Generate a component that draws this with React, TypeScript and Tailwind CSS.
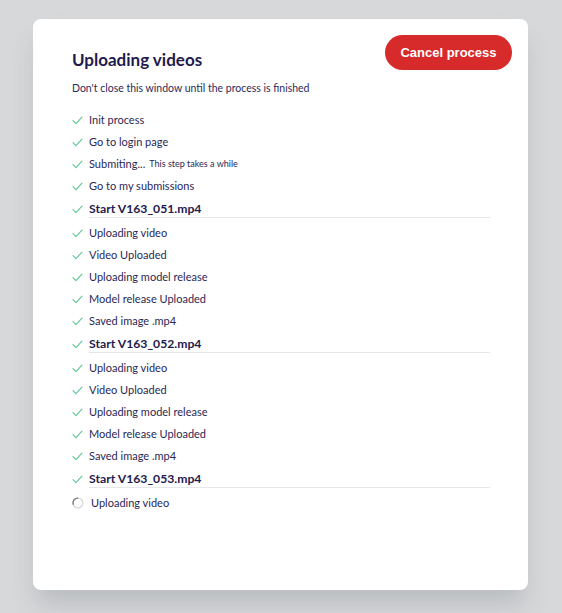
import React from "react";

type Step = { label: string; kind?: "header" | "pending"; note?: string };

const steps: Step[] = [
  { label: "Init process" },
  { label: "Go to login page" },
  { label: "Submiting...", note: "This step takes a while" },
  { label: "Go to my submissions" },
  { label: "Start V163_051.mp4", kind: "header" },
  { label: "Uploading video" },
  { label: "Video Uploaded" },
  { label: "Uploading model release" },
  { label: "Model release Uploaded" },
  { label: "Saved image .mp4" },
  { label: "Start V163_052.mp4", kind: "header" },
  { label: "Uploading video" },
  { label: "Video Uploaded" },
  { label: "Uploading model release" },
  { label: "Model release Uploaded" },
  { label: "Saved image .mp4" },
  { label: "Start V163_053.mp4", kind: "header" },
  { label: "Uploading video", kind: "pending" },
];

function Check() {
  return (
    <svg width="11" height="9" viewBox="0 0 11 9" fill="none" className="shrink-0">
      <path d="M1 4.6 L3.9 7.6 L10 1.2" stroke="#5cc795" strokeWidth="1.1" strokeLinecap="round" strokeLinejoin="round" />
    </svg>
  );
}

function Spinner() {
  return (
    <svg width="12" height="12" viewBox="0 0 12 12" className="shrink-0">
      <circle cx="6" cy="6" r="5" fill="none" stroke="#d4d4d8" strokeWidth="1.2" />
      <path d="M6 1 A5 5 0 0 0 1.2 7.3" fill="none" stroke="#71717a" strokeWidth="1.2" strokeLinecap="round" />
    </svg>
  );
}

export default function App() {
  return (
    <div className="w-[562px] h-[613px] bg-[#d7d8da] pt-[19px] pl-[33px] overflow-hidden" style={{ fontFamily: "Lato, 'Noto Sans', sans-serif" }}>
      <div className="w-[495px] h-[571px] bg-white rounded-[8px] shadow-[0_18px_24px_-4px_rgba(150,155,160,0.45)] pl-[39px] pr-[16px] pt-[16px] text-[#2a2755]">
        <div className="flex justify-between items-start">
          <h1 className="pt-[14px] text-[17px] font-bold text-[#1f1b4e] leading-[22px]">Uploading videos</h1>
          <button className="h-[35px] w-[127px] rounded-full bg-[#d72a2a] text-white text-[13px] font-bold" style={{ fontFamily: "'Liberation Sans', Arial, sans-serif" }}>
            Cancel process
          </button>
        </div>
        <p className="mt-[10px] text-[10.5px] leading-[14px] text-[#2d2a58]">Don't close this window until the process is finished</p>
        <ul className="mt-[14px] w-[418px]">
          {steps.map((s, i) =>
            s.kind === "header" ? (
              <li key={i} className="flex items-start h-[21px] mb-[4px]">
                <span className="h-[24px] flex items-center">
                  <Check />
                </span>
                <span className="ml-[6px] flex-1 h-[21px] pt-[3px] leading-[18px] border-b border-[#e6e6eb] text-[12.2px] font-bold text-[#1f1b4e]">
                  {s.label}
                </span>
              </li>
            ) : (
              <li key={i} className="flex items-center h-[22px] text-[11px]">
                {s.kind === "pending" ? <Spinner /> : <Check />}
                <span className={s.kind === "pending" ? "ml-[7px]" : "ml-[6px]"}>{s.label}</span>
                {s.note && <span className="ml-[4px] text-[9px]">{s.note}</span>}
              </li>
            )
          )}
        </ul>
      </div>
    </div>
  );
}
